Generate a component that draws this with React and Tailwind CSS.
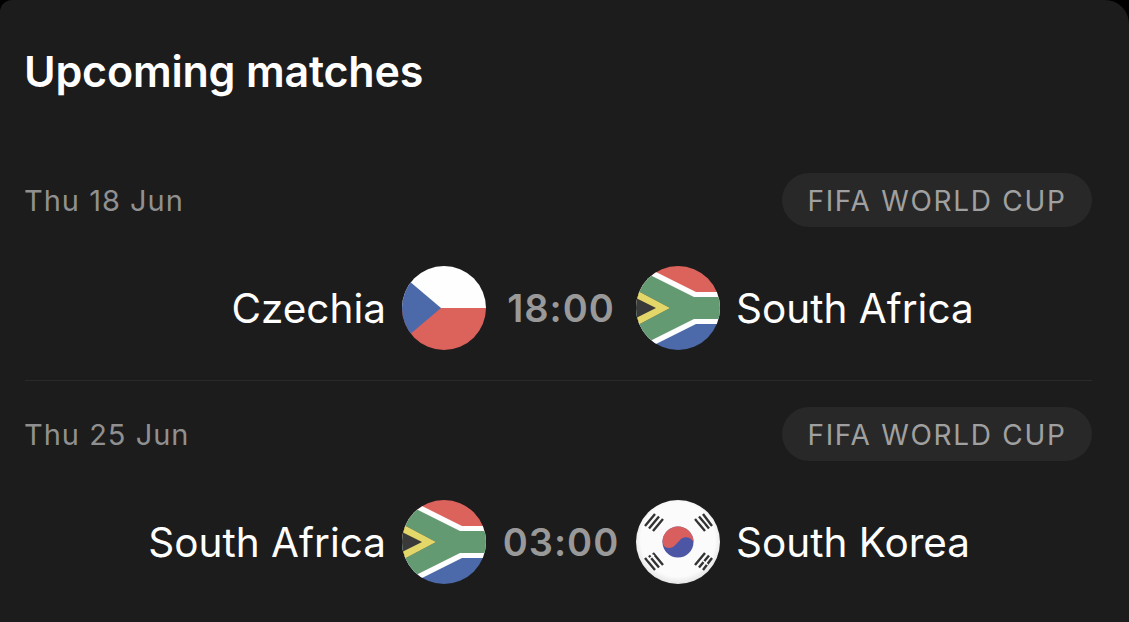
import React from 'react'

const Czech = () => (
  <svg viewBox="0 0 84 84" className="w-[84px] h-[84px] rounded-full shrink-0">
    <rect width="84" height="42" fill="#fefefe" />
    <rect y="42" width="84" height="42" fill="#dc625c" />
    <path d="M0 9 L39 42 L0 75 Z" fill="#4c69a9" />
  </svg>
)

const SouthAfrica = () => (
  <svg viewBox="0 0 84 84" className="w-[84px] h-[84px] rounded-full shrink-0">
    <rect width="84" height="42" fill="#dc625c" />
    <rect y="42" width="84" height="42" fill="#4c69a9" />
    <path d="M0 -4 L60 26 L84 26 L84 58 L60 58 L0 88 Z" fill="#fefefe" />
    <path d="M0 2 L58 31 L84 31 L84 53 L58 53 L0 82 Z" fill="#649a72" />
    <path d="M0 24 L34 42 L0 60 Z" fill="#3a3a3a" />
    <path d="M0 24 L34 42 L0 60 L0 52 L20 42 L0 32 Z" fill="#e4d76a" />
  </svg>
)

const Korea = () => (
  <svg viewBox="0 0 84 84" className="w-[84px] h-[84px] rounded-full shrink-0">
    <defs>
      <radialGradient id="kr-shade" cx="50%" cy="47%" r="52%">
        <stop offset="85%" stopColor="#fbfbfb" />
        <stop offset="100%" stopColor="#e8e8e8" />
      </radialGradient>
    </defs>
    <rect width="84" height="84" fill="url(#kr-shade)" />
    <circle cx="42" cy="42" r="15.5" fill="#4c56a4" />
    <path d="M26.5 42 A15.5 15.5 0 0 1 57.5 42 C55 37 49 36 45 39 C41 43 38 48 33 48 C29 48 27 45 26.5 42 Z" fill="#d95f5f" />
    <g stroke="#333333" strokeWidth="2.4" fill="none">
      <path d="M9 26 L19 14 M13 28.5 L23 16.5 M17 31 L27 19" />
      <path d="M59 19 L69 31 M63 16.5 L73 28.5 M67 14 L76 26" />
      <path d="M9 58 L19 70 M13 55.5 L23 67.5 M17 53 L27 65" />
      <path d="M59 65 L69 53 M63 67.5 L73 55.5 M67 70 L76 58" />
    </g>
    <path d="M12 60 L18 55 M66 60 L72 65 M62 20 L68 25" stroke="#fbfbfb" strokeWidth="1.4" />
  </svg>
)

const matches = [
  { date: 'Thu 18 Jun', home: 'Czechia', away: 'South Africa', time: '18:00', HomeFlag: Czech, AwayFlag: SouthAfrica },
  { date: 'Thu 25 Jun', home: 'South Africa', away: 'South Korea', time: '03:00', HomeFlag: SouthAfrica, AwayFlag: Korea },
]

export default function App() {
  return (
    <div className="w-[1129px] h-[622px] bg-black overflow-hidden font-['Inter',sans-serif]">
      <div className="h-full bg-[#1c1c1c] rounded-tl-[12px] rounded-tr-[24px] pl-[25px] pr-[37px] pt-[45px]">
        <h2 className="-ml-px text-[43px] leading-[52px] font-semibold text-white tracking-[-0.2px]">Upcoming matches</h2>
        <div className="mt-[76px]">
          {matches.map((m, i) => (
            <div key={m.date} className={i > 0 ? 'border-t border-[#2a2a2a] pt-[26px]' : ''}>
              <div className="flex items-center justify-between h-[54px]">
                <span className="-ml-px pt-[2px] text-[29px] text-[#909090] tracking-[1px]">{m.date}</span>
                <span className="h-[54px] w-[310px] pt-[2px] flex items-center justify-center rounded-full bg-[#282828] text-[28px] text-[#a0a0a0] tracking-[1.7px]">
                  FIFA WORLD CUP
                </span>
              </div>
              <div className="grid grid-cols-[461px_150px_1fr] items-center h-[84px] mt-[39px] mb-[30px] -mr-[5px]">
                <div className="flex items-center justify-end gap-4">
                  <span className="pt-[2px] text-[40.5px] text-white">{m.home}</span>
                  <m.HomeFlag />
                </div>
                <div className="text-center text-[38px] font-semibold text-[#999999] tracking-[1px]">{m.time}</div>
                <div className="flex items-center gap-4">
                  <m.AwayFlag />
                  <span className="pt-[2px] text-[40.5px] text-white">{m.away}</span>
                </div>
              </div>
            </div>
          ))}
        </div>
      </div>
    </div>
  )
}
